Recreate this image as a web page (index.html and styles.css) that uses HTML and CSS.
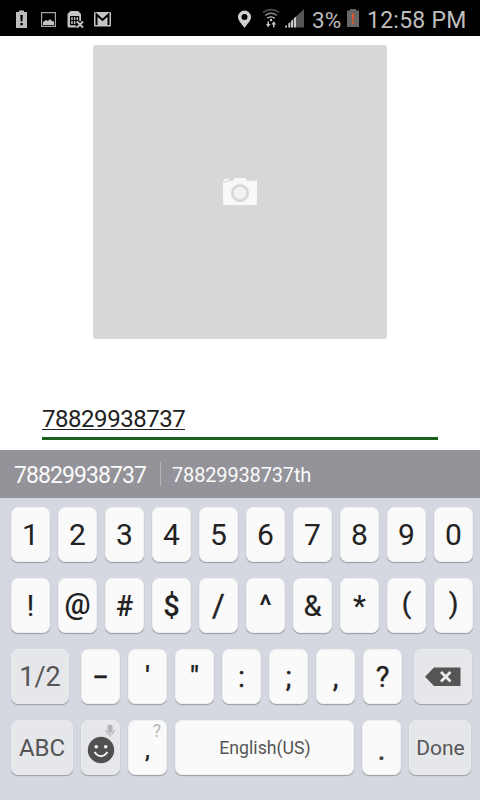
FILE: index.html
```html
<!DOCTYPE html>
<html lang="en">
<head>
<meta charset="utf-8">
<title>Profile</title>
<link rel="stylesheet" href="styles.css">
</head>
<body>
<header class="status">
  <svg class="notices" width="130" height="36" viewBox="0 0 130 36">
    <path fill="#bdbdbd" d="M16 12h3v-1.500h5V12h3v16H16z"/>
    <path fill="#000" d="M20.300 15h2.500l-.4 6.500h-1.700zM20.300 23h2.500v2.300h-2.500z"/>
    <path fill="none" stroke="#a5a5a5" stroke-width="1.200" d="M41.600 12.600h13.800v13.800H41.600z"/>
    <path fill="#c4c4c4" d="M43 25v-3l3-2 2 1 2-2 2 2 2 .5V25z"/>
    <path fill="#c4c4c4" d="M70.500 11H78l3 3v7l-3 6.500H69q-1.500 0-1.500-1.500V14z"/>
    <path fill="none" stroke="#000" stroke-width="1.200" d="M70.600 16.600h8v8h-8zM73.300 17v7.500M76 17v7.500M70.500 20.500h8"/>
    <path stroke="#000" stroke-width="4" d="M77 21.500l6 6m0-6l-6 6"/>
    <path stroke="#c4c4c4" stroke-width="1.900" d="M77 21.500l6 6m0-6l-6 6"/>
    <rect x="94" y="12" width="17" height="14.500" rx="1" fill="#c4c4c4"/>
    <path fill="none" stroke="#000" stroke-width="2" d="M96.500 25V14.500l6 5.500 6-5.500V25"/>
  </svg>
  <svg class="signals" width="72" height="36" viewBox="236 0 72 36">
    <path fill="#d0d0d0" fill-rule="evenodd" d="M244.500 28c-2.500-4-6.500-7-6.500-11a6.500 6.500 0 0 1 13 0c0 4-4 7-6.500 11zm0-14a3 3 0 1 0 0 6 3 3 0 0 0 0-6z"/>
    <g fill="none" stroke-width="1.400">
      <path stroke="#555" d="M263 12.500q8-6 16 0"/>
      <path stroke="#888" d="M265 15.500q6-4.500 12 0"/>
      <path stroke="#ccc" d="M267.300 18.300q3.700-2.800 7.400 0"/>
    </g>
    <circle cx="271" cy="20" r="1.200" fill="#ccc"/>
    <path fill="#ccc" d="M267.500 21.500h1.500V24h1.500l-2.300 3.200L266 24h1.500zM273 27.200h1.500V24.500h1.500l-2.200-3.200-2.300 3.200h1.500z"/>
    <path fill="#555" d="M296 16.500L304 9v18.500h-8z"/>
    <path fill="#ccc" d="M285 27.500v-1l2-1.500v2.500zM288.300 27.500v-4l2-1.500v5.500zM291 27.500V21l2-1.500v8zM293.700 27.500v-9l2.300-2v11z"/>
  </svg>
  <span class="percent">3%</span>
  <svg class="battery" width="12" height="36" viewBox="0 0 12 36">
    <path fill="#666" d="M0 10.500h3V9h6v1.500h3V27H0z"/>
    <path fill="#dc5432" d="M4.700 13.500h2.600l-.5 7.500H5.200zM4.800 22h2.400v2.300H4.800z"/>
  </svg>
  <span class="clock">12:58 PM</span>
</header>
<main class="form">
  <div class="photo">
    <svg width="34" height="28" viewBox="0 0 34 28">
      <path fill="#f7f8f8" d="M0 4.200L1.500 1H6.500v1.600L11 2.200V0h12v2.700h11V27H0z"/>
      <path stroke="#d6d8d7" stroke-width="1" d="M1 4.200l8-2"/>
      <circle cx="17" cy="15" r="7.700" fill="#f0f1f1" stroke="#d6d8d7" stroke-width="2.700"/>
    </svg>
  </div>
  <div class="field"><span class="value">78829938737</span></div>
</main>
<div class="suggestions">
  <span class="first">78829938737</span>
  <span class="second">78829938737th</span>
</div>
<section class="keyboard">
  <div class="row digits">
    <span class="key">1</span><span class="key">2</span><span class="key">3</span><span class="key">4</span><span class="key">5</span><span class="key">6</span><span class="key">7</span><span class="key">8</span><span class="key">9</span><span class="key">0</span>
  </div>
  <div class="row symbols">
    <span class="key regular">!</span><span class="key at">@</span><span class="key">#</span><span class="key">$</span><span class="key slash">/</span><span class="key">^</span><span class="key regular">&amp;</span><span class="key">*</span><span class="key paren">(</span><span class="key paren">)</span>
  </div>
  <div class="row marks">
    <span class="key dark half">1/2</span>
    <span class="key dash">–</span><span class="key quote">'</span><span class="key quote">"</span><span class="key point">:</span><span class="key point">;</span><span class="key point">,</span><span class="key point">?</span>
    <span class="key dark erase">
      <svg width="36" height="20" viewBox="0 0 36 20">
        <path fill="#555" d="M0 9.800L9 .5h26.500v18.500H9z"/>
        <path stroke="#ececef" stroke-width="2.700" d="M16 5l9.500 9.500m0-9.500l-9.500 9.500"/>
      </svg>
    </span>
  </div>
  <div class="row bottom">
    <span class="key dark abc">ABC</span>
    <span class="key dark emoji">
      <svg width="37" height="53" viewBox="0 0 37 53">
        <circle cx="19" cy="29" r="13.200" fill="#505050"/>
        <circle cx="14.300" cy="25.700" r="1.800" fill="#f5f5f5"/>
        <circle cx="23.700" cy="25.700" r="1.800" fill="#f5f5f5"/>
        <path fill="none" stroke="#f5f5f5" stroke-width="2" d="M12.500 31q6.500 8.500 13 0"/>
        <rect x="25.500" y="3.500" width="5" height="8.500" rx="2.500" fill="#b3b4b6"/>
        <path fill="none" stroke="#b3b4b6" stroke-width="1.200" d="M24 9q0 4.500 4 4.500t4-4.500M28 13.500V16"/>
      </svg>
    </span>
    <span class="key comma">,<small class="hint">?</small></span>
    <span class="key space">English(US)</span>
    <span class="key period">.</span>
    <span class="key dark done">Done</span>
  </div>
</section>
</body>
</html>
```
FILE: styles.css
```css
* { box-sizing: border-box; }

body {
  margin: 0;
  width: 480px;
  height: 800px;
  overflow: hidden;
  background: #fff;
  font-family: Roboto, "Liberation Sans", sans-serif;
}

svg { display: block; flex: none; }

.status {
  display: flex;
  height: 36px;
  background: #000;
  color: #bebebe;
  font-size: 23px;
  line-height: 41px;
  white-space: nowrap;
}
.signals { margin-left: 106px; }
.percent {
  width: 35px;
  margin-left: 4px;
  font-size: 22.500px;
  letter-spacing: 0.2px;
}
.clock { margin-left: 7px; padding-left: 1px; letter-spacing: 0.25px; }

.form { height: 414px; padding: 9px 42px 0; }
.photo {
  display: flex;
  align-items: center;
  justify-content: center;
  width: 294px;
  height: 294px;
  margin: 0 auto;
  border-radius: 3px;
  background: #d6d8d7;
}
.field {
  height: 38px;
  margin-top: 63px;
  border-bottom: 3px solid #1b5e20;
  color: #212121;
  font-size: 24px;
  line-height: 34px;
  letter-spacing: -0.46px;
}
.value {
  display: inline-block;
  height: 28px;
  border-bottom: 1px solid #212121;
}

.suggestions {
  display: flex;
  align-items: center;
  height: 48px;
  padding-left: 14px;
  background: #949399;
  color: #fafafa;
}
.first {
  width: 147px;
  height: 24px;
  border-right: 1px solid #b3b3b7;
  font-size: 23px;
  line-height: 27px;
  letter-spacing: -0.93px;
}
.second {
  padding: 2px 0 0 11px;
  font-size: 20px;
  line-height: 24px;
  letter-spacing: -0.16px;
}

.keyboard {
  display: flex;
  flex-direction: column;
  gap: 16px;
  height: 302px;
  padding: 9px 0 0 11px;
  background: #d5d8e0;
}
.row { display: flex; gap: 8px; height: 55px; }
.key {
  display: flex;
  align-items: center;
  justify-content: center;
  flex: none;
  width: 39px;
  height: 55px;
  border: 1px solid #eff0f3;
  border-radius: 7px;
  background: #fafafa;
  box-shadow: 0 1px 1px #9b9da2;
  color: #222;
  font-size: 29px;
  font-weight: 500;
  line-height: 34px;
}
.digits .key { font-size: 30px; font-weight: 400; }
.symbols .regular { font-weight: 400; -webkit-text-stroke: 0.2px; }
.symbols .at { padding-bottom: 3px; }
.symbols .slash { font-size: 31px; font-weight: 400; -webkit-text-stroke: 0.4px; }
.symbols .paren { padding-bottom: 3px; font-size: 28px; font-weight: 400; -webkit-text-stroke: 0.3px; }
.dark {
  border-color: #eaebee;
  background: #e6e7eb;
  color: #555;
  font-weight: 400;
}
.half { width: 58px; margin-right: 4px; font-size: 27px; }
.dash { font-size: 24px; -webkit-text-stroke: 0.4px; }
.quote { font-size: 27px; -webkit-text-stroke: 0.2px; }
.point { font-weight: 400; -webkit-text-stroke: 0.3px; }
.erase { width: 58px; margin-left: 4px; }
.abc { width: 62px; font-size: 24px; }
.comma { position: relative; padding-top: 4px; font-size: 24px; }
.hint {
  position: absolute;
  top: 0;
  right: 5px;
  color: #b5b5b5;
  font-size: 18px;
  font-weight: 400;
  line-height: 20px;
}
.space { width: 179px; padding-left: 1px; color: #555; font-size: 17.700px; font-weight: 400; }
.period { padding-top: 5px; color: #444; }
.done { width: 62px; padding-left: 1px; font-size: 21px; }
```
